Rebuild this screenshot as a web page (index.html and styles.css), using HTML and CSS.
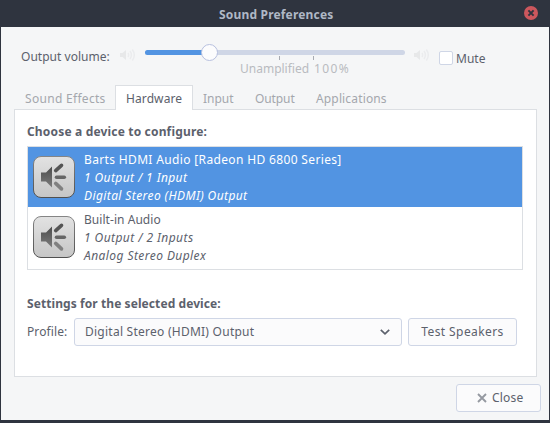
FILE: index.html
```html
<!DOCTYPE html>
<html lang="en">
<head>
<meta charset="utf-8">
<title>Sound Preferences</title>
<link rel="stylesheet" href="styles.css">
</head>
<body>
<svg class="defs" width="0" height="0" aria-hidden="true">
  <defs>
    <linearGradient id="face" x1="0" y1="0" x2="0" y2="1"><stop offset="0" stop-color="#e2e2e2"/><stop offset="1" stop-color="#c6c6c6"/></linearGradient>
    <linearGradient id="edge" x1="0" y1="0" x2="0" y2="1"><stop offset="0" stop-color="#858585"/><stop offset="1" stop-color="#505050"/></linearGradient>
    <linearGradient id="cone" x1="0" y1="0" x2="0" y2="1"><stop offset="0" stop-color="#4c4c4c"/><stop offset="1" stop-color="#7c7c7c"/></linearGradient>
    <symbol id="card" viewBox="0 0 44 44">
      <rect x="1.500" y="1.500" width="41" height="41" rx="7.500" fill="url(#face)" stroke="url(#edge)"/>
      <path d="M9 17.500h5l6-6v21l-6-6H9z" fill="url(#cone)"/>
      <g fill="none" stroke-width="3.600" stroke-linecap="round"><path d="M23.700 15.600l5.800-5.300" stroke="#555"/><path d="M24.500 22.200h7.800" stroke="#666"/><path d="M23.700 28.400l5.800 5.500" stroke="#808080"/></g>
    </symbol>
    <symbol id="vol" viewBox="0 0 17 14">
      <path d="M1 5h2.500L7 2v10L3.500 9H1z" fill="#e7e8e9"/>
      <path d="M9 5q1.300 2 0 4M11 3q2.800 4 0 8M13.300 1.500q4 5.500 0 11" fill="none" stroke="#ebecee" stroke-width="1.500"/>
    </symbol>
  </defs>
</svg>
<div class="window">
  <header class="titlebar">
    <h1 class="title">Sound Preferences</h1>
    <svg class="quit" viewBox="0 0 14 14"><circle cx="7" cy="7" r="7" fill="#cc575d"/><path d="M4.400 4.400l5.200 5.200M9.600 4.400l-5.200 5.200" stroke="#2f343f" stroke-width="2"/></svg>
  </header>
  <section class="volume">
    <span class="volume-label">Output volume:</span>
    <svg class="speaker"><use href="#vol"/></svg>
    <div class="slider">
      <div class="track"><div class="fill"></div><div class="knob"></div></div>
      <div class="marks"><i class="tick"></i><i class="tick"></i></div>
      <div class="mark-text"><span class="unamp">Unamplified</span><span class="full">100%</span></div>
    </div>
    <svg class="speaker right"><use href="#vol"/></svg>
    <label class="mute"><span class="box"></span><span class="mute-text">Mute</span></label>
  </section>
  <nav class="tabs">
    <span class="tab effects">Sound Effects</span>
    <span class="tab active">Hardware</span>
    <span class="tab input">Input</span>
    <span class="tab output">Output</span>
    <span class="tab apps">Applications</span>
  </nav>
  <main class="panel">
    <h2 class="heading choose">Choose a device to configure:</h2>
    <ul class="devices">
      <li class="device selected">
        <svg class="card"><use href="#card"/></svg>
        <div class="info"><span class="barts">Barts HDMI Audio [Radeon HD 6800 Series]</span><em class="one">1 Output / 1 Input</em><em class="digital">Digital Stereo (HDMI) Output</em></div>
      </li>
      <li class="device">
        <svg class="card"><use href="#card"/></svg>
        <div class="info"><span class="builtin">Built-in Audio</span><em class="two">1 Output / 2 Inputs</em><em class="analog">Analog Stereo Duplex</em></div>
      </li>
    </ul>
    <h2 class="heading settings">Settings for the selected device:</h2>
    <div class="profile">
      <span class="profile-label">Profile:</span>
      <div class="button combo"><span class="combo-text">Digital Stereo (HDMI) Output</span><svg class="chevron" viewBox="0 0 10 6"><path d="M.8 .8L5 4.800 9.200 .8" fill="none" stroke="#5c616c" stroke-width="1.700"/></svg></div>
      <div class="button test"><span>Test Speakers</span></div>
    </div>
  </main>
  <footer class="actions">
    <div class="button close"><svg class="cross" viewBox="0 0 10 10"><path d="M1 1l8 8M9 1L1 9" stroke="#9599a1" stroke-width="1.900"/></svg><span>Close</span></div>
  </footer>
</div>
</body>
</html>
```
FILE: styles.css
```css
* { box-sizing: border-box; }
body { margin: 0; background: #2f343f; font: 12px/18px "Noto Sans", sans-serif; color: #5c616c; white-space: nowrap; letter-spacing: .4px; }
h1, h2, ul { margin: 0; padding: 0; font-size: 12px; list-style: none; }
.defs { position: absolute; }
.window { width: 550px; height: 423px; border: solid #2f343f; border-width: 0 1px 3px; background: #f5f6f7; display: flex; flex-direction: column; }
.titlebar { height: 27px; flex: none; background: #2f343f; display: grid; grid-template-columns: 218px 1fr 14px; padding-right: 11px; align-items: center; }
.title { grid-column: 2; color: #afb8c6; letter-spacing: .18px; padding-top: 2px; }
.quit { width: 14px; height: 14px; margin-top: -1px; }
.volume { height: 58px; flex: none; display: flex; padding-left: 20px; }
.volume-label { width: 98px; padding-top: 21px; letter-spacing: .03px; }
.speaker { width: 17px; height: 14px; margin-top: 21px; }
.slider { width: 260px; margin-left: 9px; padding-top: 23px; }
.track { height: 5px; border-radius: 3px; background: #cfd6e6; position: relative; }
.fill { width: 65px; height: 5px; border-radius: 3px; background: #5294e2; }
.knob { position: absolute; left: 56px; top: -6px; width: 17px; height: 17px; border-radius: 50%; background: #fcfcfd; border: 1px solid #b7c0df; }
.marks { display: flex; gap: 33px; padding: 1px 0 0 134px; height: 5px; }
.tick { width: 1px; height: 4px; background: #a8abb2; }
.mark-text { display: flex; padding-left: 95px; color: #b9bbc0; }
.unamp { width: 74px; letter-spacing: 0; }
.full { letter-spacing: 1.4px; }
.right { margin-left: 8px; }
.mute { display: flex; padding-left: 9px; }
.box { width: 14px; height: 14px; margin-top: 24px; border: 1px solid #cfd6e6; border-radius: 2px; background: #fff; }
.mute-text { margin: 23px 0 0 3px; letter-spacing: 0; }
.tabs { height: 25px; flex: none; display: flex; padding: 0 0 0 24px; color: #a4a7ad; margin-bottom: -1px; position: relative; }
.tab { padding-top: 5px; flex: none; }
.effects { width: 90px; letter-spacing: .3px; }
.active { width: 78px; padding: 4px 10px 0; color: #5c616c; background: #fff; border: 1px solid #dcdfe3; border-bottom: 0; letter-spacing: .1px; }
.input { width: 62px; padding-left: 10px; letter-spacing: 0; }
.output { width: 61px; letter-spacing: -.1px; }
.apps { letter-spacing: .15px; }
.panel { height: 268px; flex: none; margin: 0 12px 0 13px; border: 1px solid #dcdfe3; background: #fff; padding: 13px 13px 0 12px; }
.heading { height: 18px; }
.choose { letter-spacing: .17px; }
.devices { margin-top: 5px; border: 1px solid #dcdfe3; height: 124px; }
.device { height: 60px; display: flex; padding: 4px 0 0 4px; }
.selected { background: #5294e2; color: #fff; }
.card { width: 44px; height: 44px; margin-top: 4px; }
.info { display: flex; flex-direction: column; margin-left: 8px; }
.barts { letter-spacing: .35px; }
.builtin { letter-spacing: .05px; }
.two, .analog { letter-spacing: .43px; }
.settings { margin-top: 25px; letter-spacing: .08px; }
.profile { display: flex; margin-top: 5px; align-items: center; }
.profile-label { width: 47px; letter-spacing: .1px; }
.button { height: 28px; border: 1px solid #cfd6e6; border-radius: 3px; background: #fbfbfc; display: flex; align-items: center; }
.combo { width: 328px; padding: 0 11px 0 10px; justify-content: space-between; }
.combo-text { letter-spacing: .25px; }
.chevron { width: 10px; height: 6px; }
.test { width: 109px; margin-left: 6px; justify-content: center; }
.actions { display: flex; justify-content: flex-end; padding: 7px 8px 0; }
.close { width: 85px; padding-left: 20px; gap: 5px; letter-spacing: .2px; }
.cross { width: 10px; height: 10px; }
```
